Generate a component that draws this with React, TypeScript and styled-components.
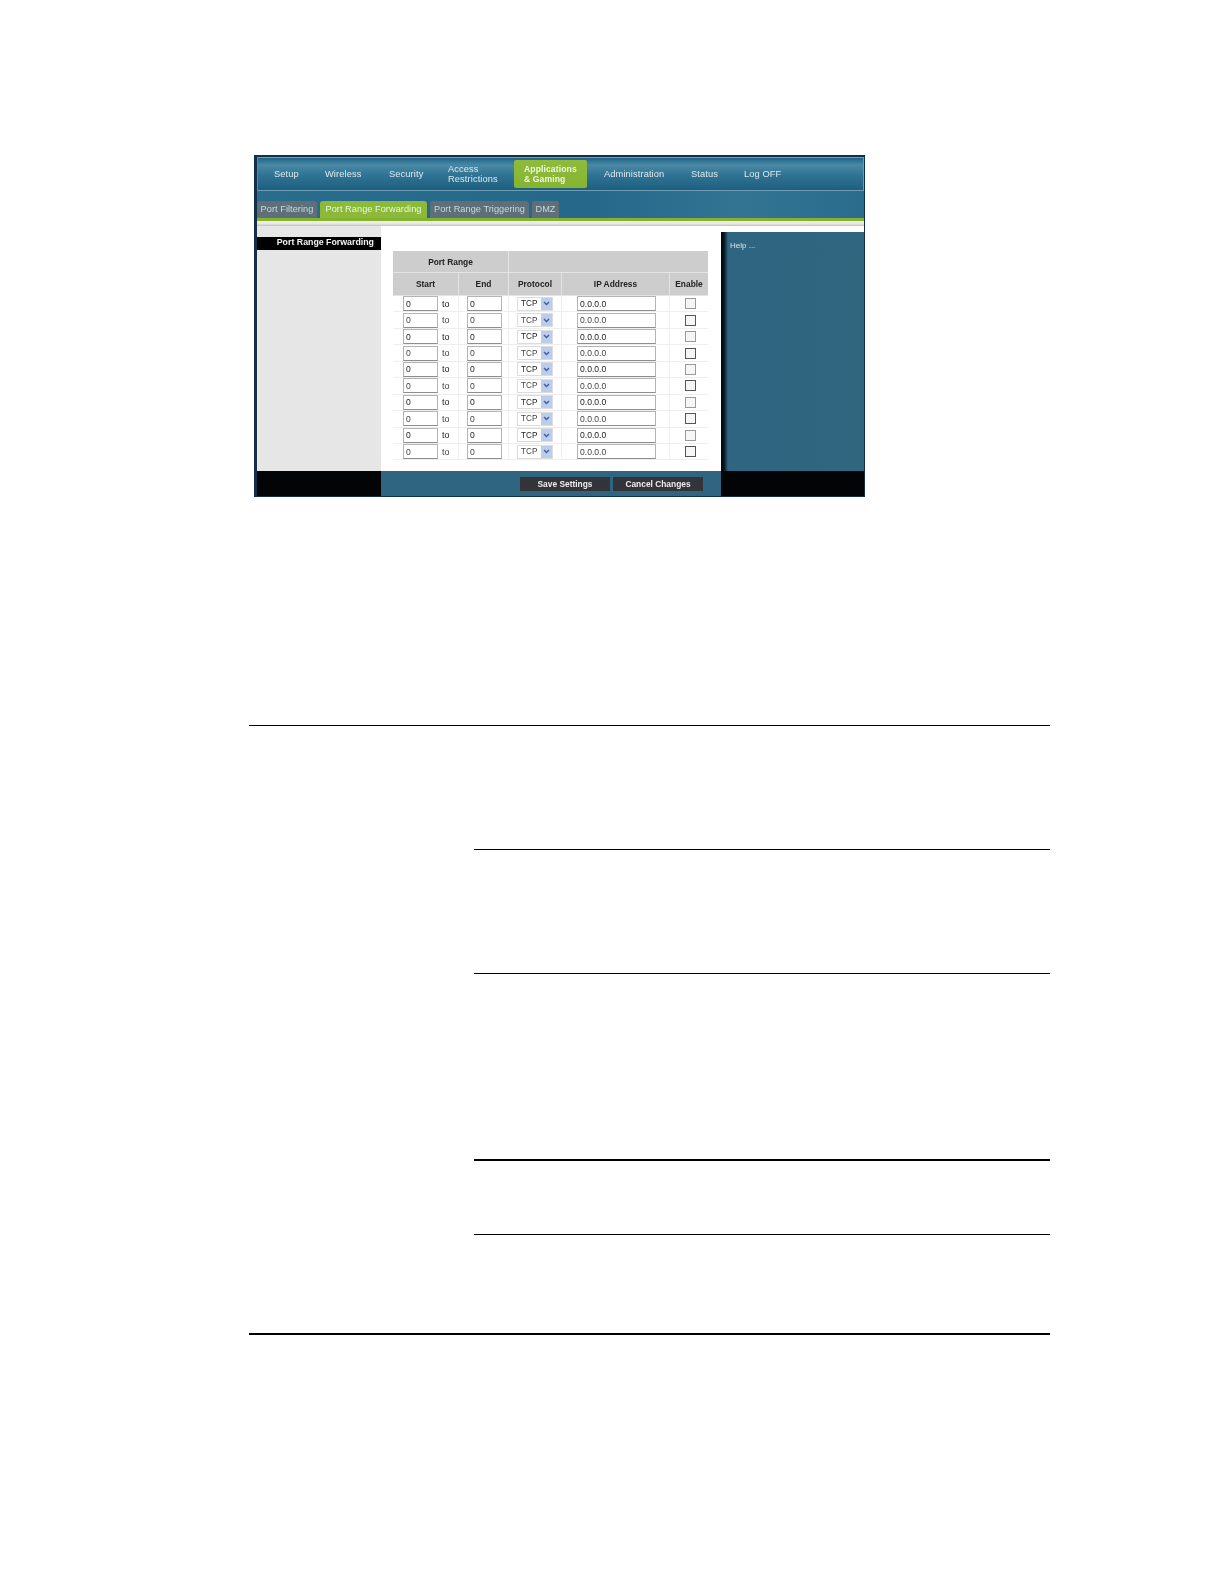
import React from "react";
import styled, { createGlobalStyle } from "styled-components";

const Global = createGlobalStyle`
  html, body { margin: 0; padding: 0; background: #fff; }
  body { font-family: "Liberation Sans", Arial, sans-serif; width: 1224px; height: 1584px; overflow: hidden; }
`;

const Page = styled.div`
  display: flex;
  flex-direction: column;
  padding: 155px 0 0 249px;
`;

const Frame = styled.div`
  display: flex;
  flex-direction: column;
  width: 607px;
  height: 339px;
  margin-left: 5px;
  padding: 2px 1px 1px 3px;
  background: #12304a;
  filter: blur(0.4px);
  font-size: 10px;
  color: #e6eef2;
`;

const TopNav = styled.nav`
  display: flex;
  align-items: center;
  height: 34px;
  box-sizing: border-box;
  border: 1px solid #6d9db5;
  border-left-color: #4f8aa6;
  background: linear-gradient(180deg, #1f6486 0%, #4a89a5 22%, #2f7292 55%, #1e5f80 100%);
`;

const NavItem = styled.div<{ $w: number; $active?: boolean }>`
  flex: 0 0 auto;
  width: ${(p) => p.$w}px;
  box-sizing: border-box;
  line-height: 10.5px;
  font-size: 9.3px;
  letter-spacing: 0.1px;
  color: #dfe9ee;
  padding-left: ${(p) => (p.$active ? 10 : 0)}px;
`;

const ActiveNav = styled(NavItem)`
  height: 28px;
  display: flex;
  flex-direction: column;
  justify-content: center;
  background: linear-gradient(180deg, #8fbb3a, #86b431);
  border-radius: 2px;
  font-size: 8.6px;
  font-weight: 700;
  color: #f0f6e2;
  margin-right: 17px;
`;

const NavLead = styled.div`
  flex: 0 0 16px;
`;

const TabRow = styled.div`
  display: flex;
  align-items: flex-end;
  gap: 3px;
  height: 27px;
  background: linear-gradient(90deg, #2a6c8c 0%, #26688a 55%, #327492 80%, #2a6c8c 100%);
`;

const Tab = styled.div<{ $w: number; $active?: boolean }>`
  width: ${(p) => p.$w}px;
  height: 17px;
  line-height: 17px;
  text-align: center;
  font-size: 9.2px;
  letter-spacing: 0.05px;
  white-space: nowrap;
  border-radius: 3px 3px 0 0;
  background: ${(p) => (p.$active ? "#8db93a" : "#5d6f78")};
  color: ${(p) => (p.$active ? "#eef5dc" : "#cfd8dc")};
`;

const GreenBar = styled.div`
  height: 3px;
  background: #86b32f;
`;

const LightBar = styled.div`
  height: 5px;
  background: linear-gradient(180deg, #f0f0ea 0%, #e6e6e4 60%, #bdbdbd 100%);
`;

const Columns = styled.div`
  display: grid;
  grid-template-columns: 124px 340px 143px;
  height: 245px;
`;

const LeftCol = styled.div`
  background: #e6e6e6;
  padding-top: 11px;
  border-right: 1px solid #c4c4c4;
  margin-right: -1px;
`;

const SideTitle = styled.div`
  height: 13px;
  line-height: 11px;
  background: #000;
  color: #f2f2f2;
  font-weight: 700;
  font-size: 8.8px;
  text-align: right;
  padding-right: 7px;
  white-space: nowrap;
`;

const Center = styled.div`
  background: #fff;
  padding: 25px 0 0 12px;
`;

const RightCol = styled.div`
  padding-top: 6px;
  background: #fff;
  display: flex;
`;

const HelpPanel = styled.div`
  flex: 1;
  padding: 9px 0 0 9px;
  font-size: 8px;
  color: #d7e4ea;
  background: linear-gradient(90deg, #02080c 0px, #06141d 3px, #2f6581 7px, #31667f 100%);
`;

const Table = styled.div`
  width: 315px;
  color: #222;
`;

const HeadRow = styled.div`
  display: grid;
  grid-template-columns: 116px 199px;
  height: 22px;
  background: #cdcdcd;
`;

const ColRow = styled.div`
  display: grid;
  grid-template-columns: 66px 50px 53px 108px 38px;
  height: 23px;
  background: #cdcdcd;
`;

const HeadCell = styled.div`
  display: flex;
  align-items: center;
  justify-content: center;
  font-size: 8.4px;
  font-weight: 700;
  color: #222;
  border-right: 1px solid #e4e4e4;
  border-bottom: 1px solid #e4e4e4;
  box-sizing: border-box;
  &:last-child { border-right: 0; }
`;

const Row = styled.div`
  display: grid;
  grid-template-columns: 66px 50px 53px 108px 38px;
  height: 16.45px;
  box-sizing: border-box;
  border-bottom: 1px solid #eee;
  &:nth-child(even) { color: #444; }
  &:nth-child(even) input[type="checkbox"] { border-color: #555; }
`;

const Cell = styled.div<{ $pad?: number }>`
  display: flex;
  align-items: center;
  padding-left: ${(p) => p.$pad ?? 0}px;
  border-right: 1px solid #efefef;
  box-sizing: border-box;
  &:last-child { border-right: 0; }
`;

const TextField = styled.input<{ $w: number }>`
  width: ${(p) => p.$w}px;
  height: 15px;
  box-sizing: border-box;
  padding: 0 0 0 2px;
  margin: 0;
  border: 1px solid #b4b4b4;
  border-bottom-color: #8e8e8e;
  background: #fff;
  font: 8.6px "Liberation Sans", Arial, sans-serif;
  color: inherit;
  outline: none;
`;

const ToLabel = styled.span`
  margin-left: 4px;
  font-size: 9px;
`;

const FakeSelect = styled.div`
  display: flex;
  align-items: center;
  width: 36px;
  height: 14px;
  box-sizing: border-box;
  border: 1px solid #dcdcdc;
  font-size: 8.2px;
  padding-left: 3px;
  justify-content: space-between;
`;

const SelectArrow = styled.span`
  display: flex;
  align-items: center;
  justify-content: center;
  width: 11px;
  height: 12px;
  background: #bccdec;
`;

const Check = styled.input`
  appearance: none;
  width: 11px;
  height: 11px;
  margin: 0;
  border: 1px solid #9a9a9a;
  background: #f6f6f6;
`;

const Footer = styled.div`
  display: grid;
  grid-template-columns: 124px 340px 143px;
  height: 25px;
`;

const FooterBlack = styled.div`
  background: #020406;
`;

const FooterActions = styled.div`
  display: flex;
  gap: 3px;
  padding: 6px 0 0 139px;
  background: #2f6581;
`;

const ActionButton = styled.div`
  width: 90px;
  height: 14px;
  line-height: 14px;
  text-align: center;
  background: #333437;
  color: #eee;
  font-size: 8.4px;
  font-weight: 700;
`;

const Rules = styled.div`
  display: flex;
  flex-direction: column;
  width: 801px;
`;

const Rule = styled.div<{ $top: number; $inset?: number; $h?: number }>`
  margin-top: ${(p) => p.$top}px;
  margin-left: ${(p) => p.$inset ?? 0}px;
  height: ${(p) => p.$h ?? 1}px;
  background: #000;
`;

const rows = Array.from({ length: 10 }, (_, i) => i);

export default function App() {
  return (
    <>
      <Global />
      <Page>
        <Frame>
          <TopNav>
            <NavLead />
            <NavItem $w={51}>Setup</NavItem>
            <NavItem $w={64}>Wireless</NavItem>
            <NavItem $w={59}>Security</NavItem>
            <NavItem $w={66}>Access<br />Restrictions</NavItem>
            <ActiveNav $w={73} $active>Applications<br />&amp; Gaming</ActiveNav>
            <NavItem $w={87}>Administration</NavItem>
            <NavItem $w={53}>Status</NavItem>
            <NavItem $w={60}>Log OFF</NavItem>
          </TopNav>
          <TabRow>
            <Tab $w={60}>Port Filtering</Tab>
            <Tab $w={107} $active>Port Range Forwarding</Tab>
            <Tab $w={99}>Port Range Triggering</Tab>
            <Tab $w={27}>DMZ</Tab>
          </TabRow>
          <GreenBar />
          <LightBar />
          <Columns>
            <LeftCol>
              <SideTitle>Port Range Forwarding</SideTitle>
            </LeftCol>
            <Center>
              <Table>
                <HeadRow>
                  <HeadCell>Port Range</HeadCell>
                  <HeadCell />
                </HeadRow>
                <ColRow>
                  <HeadCell>Start</HeadCell>
                  <HeadCell>End</HeadCell>
                  <HeadCell>Protocol</HeadCell>
                  <HeadCell>IP Address</HeadCell>
                  <HeadCell>Enable</HeadCell>
                </ColRow>
                <div>
                  {rows.map((i) => (
                    <Row key={i}>
                      <Cell $pad={10}>
                        <TextField $w={35} readOnly value="0" />
                        <ToLabel>to</ToLabel>
                      </Cell>
                      <Cell $pad={8}>
                        <TextField $w={35} readOnly value="0" />
                      </Cell>
                      <Cell $pad={8}>
                        <FakeSelect>
                          TCP
                          <SelectArrow>
                            <svg width="7" height="5" viewBox="0 0 7 5">
                              <path d="M1 1l2.5 2.5L6 1" fill="none" stroke="#3c5fa8" strokeWidth="1.4" />
                            </svg>
                          </SelectArrow>
                        </FakeSelect>
                      </Cell>
                      <Cell $pad={15}>
                        <TextField $w={79} readOnly value="0.0.0.0" />
                      </Cell>
                      <Cell $pad={15}>
                        <Check type="checkbox" readOnly />
                      </Cell>
                    </Row>
                  ))}
                </div>
              </Table>
            </Center>
            <RightCol>
              <HelpPanel>Help ...</HelpPanel>
            </RightCol>
          </Columns>
          <Footer>
            <FooterBlack />
            <FooterActions>
              <ActionButton>Save Settings</ActionButton>
              <ActionButton>Cancel Changes</ActionButton>
            </FooterActions>
            <FooterBlack />
          </Footer>
        </Frame>
        <Rules>
          <Rule $top={228} />
          <Rule $top={123} $inset={225} />
          <Rule $top={123} $inset={225} />
          <Rule $top={185} $inset={225} $h={2} />
          <Rule $top={73} $inset={225} />
          <Rule $top={98} $h={2} />
        </Rules>
      </Page>
    </>
  );
}
